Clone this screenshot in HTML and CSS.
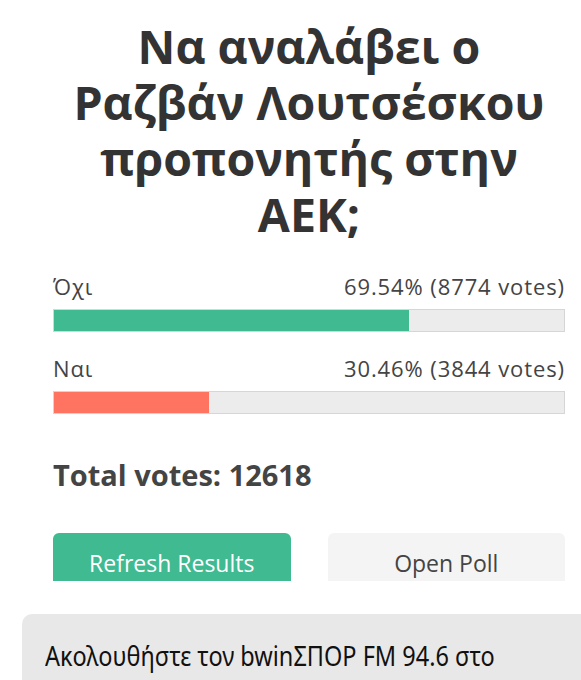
FILE: index.html
```html
<!DOCTYPE html>
<html lang="el">
<head>
<meta charset="utf-8">
<link rel="stylesheet" href="styles.css">
</head>
<body>
<div class="poll">
  <h1 class="title">Να αναλάβει ο Ραζβάν Λουτσέσκου προπονητής στην ΑΕΚ;</h1>
  <div class="option">
    <div class="option-head"><span>Όχι</span><span>69.54% (8774 votes)</span></div>
    <div class="bar"><div class="fill fill-green" style="width:69.54%"></div></div>
  </div>
  <div class="option">
    <div class="option-head"><span>Ναι</span><span>30.46% (3844 votes)</span></div>
    <div class="bar"><div class="fill fill-red" style="width:30.46%"></div></div>
  </div>
  <div class="total">Total votes: 12618</div>
  <div class="buttons">
    <div class="btn btn-primary">Refresh Results</div>
    <div class="btn btn-secondary">Open Poll</div>
  </div>
</div>
<div class="follow">
  <p class="follow-text">Ακολουθήστε τον bwinΣΠΟΡ FM 94.6 στο</p>
</div>
</body>
</html>
```
FILE: styles.css
```css
html, body {
  margin: 0;
  padding: 0;
  background: #fff;
}
body {
  overflow: hidden;
  height: 680px;
}
.poll {
  margin: 0 16px 0 53px;
  padding-top: 18px;
}
.title {
  margin: 0;
  font-family: "Open Sans", sans-serif;
  font-weight: 700;
  font-size: 46.5px;
  line-height: 56px;
  color: #333;
  text-align: center;
}
.option {
  margin-top: 30px;
}
.option + .option {
  margin-top: 22px;
}
.option-head {
  display: flex;
  justify-content: space-between;
  font-family: "Open Sans", sans-serif;
  font-size: 22px;
  letter-spacing: 0.9px;
  line-height: 28px;
  color: #444;
}
.bar {
  margin-top: 9px;
  height: 21px;
  border: 1px solid #d6d6d6;
  background: #ececec;
  display: flex;
}
.fill {
  height: 100%;
}
.fill-green { background: #3fba91; }
.fill-red { background: #ff7461; }
.total {
  margin-top: 44px;
  font-family: "Open Sans", sans-serif;
  font-weight: 700;
  font-size: 29px;
  line-height: 34px;
  color: #444;
}
.buttons {
  margin-top: 41px;
  display: grid;
  grid-template-columns: 1fr 1fr;
  gap: 37px;
  height: 48px;
  overflow: hidden;
}
.btn {
  height: 60px;
  border-radius: 6px;
  font-family: "Open Sans", sans-serif;
  font-size: 23px;
  line-height: 60px;
  text-align: center;
}
.btn-primary {
  background: #3fba91;
  color: #fff;
}
.btn-secondary {
  background: #f4f4f4;
  color: #444;
}
.follow {
  margin: 33px 0 0 22px;
  background: #e8e8e8;
  border-radius: 10px 0 0 0;
  padding: 24px 0 20px 23px;
}
.follow-text {
  margin: 0;
  font-family: "Noto Sans", "DejaVu Sans Condensed", sans-serif;
  font-size: 27px;
  line-height: 36px;
  color: #111;
  white-space: nowrap;
  transform: scaleX(0.87);
  transform-origin: left center;
}
```
